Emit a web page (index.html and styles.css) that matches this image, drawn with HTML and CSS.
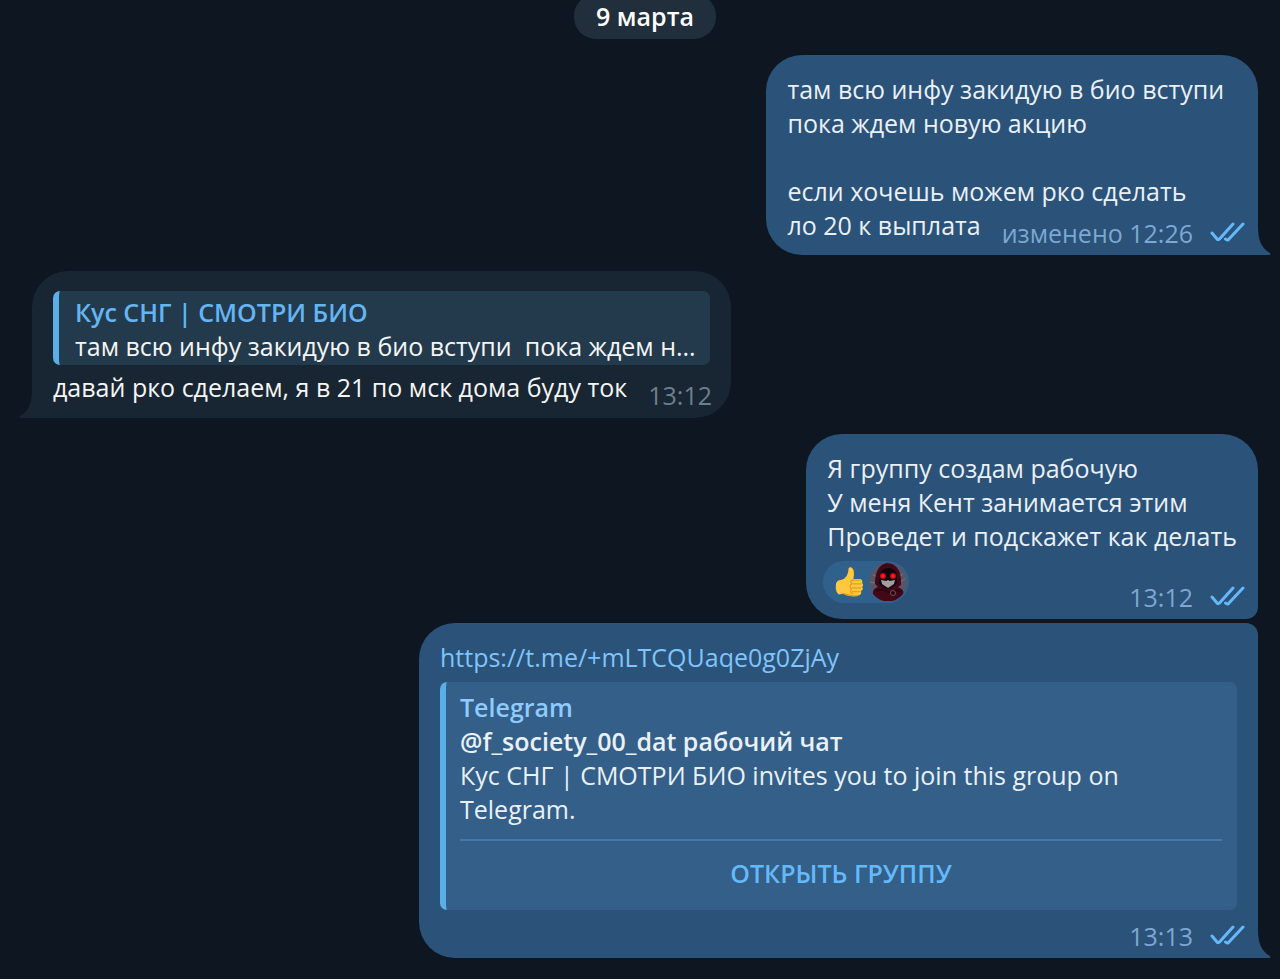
FILE: index.html
```
<!DOCTYPE html>
<html lang="ru">
<head>
  <meta charset="UTF-8">
  <title>Чат</title>
  <link rel="stylesheet" href="styles.css">
</head>
<body>
  <!-- shared icons -->
  <svg class="sprite" aria-hidden="true">
    <symbol id="checks" viewBox="0 0 36 22">
      <path d="M3 12 L8.500 18.500 Q9.500 19 10.500 18 L24 3 M16.500 18 Q18.500 20 20 18 L34 3" />
    </symbol>
    <symbol id="tail" viewBox="0 0 14 28">
      <path d="M0 0 C0 12 3 21 12 26 Q13 28 11 28 L0 28 Z" />
    </symbol>
  </svg>

  <main class="chat">
    <time class="date">9 марта</time>

    <article class="message out">
      <p>там всю инфу закидую в био вступи<br>пока ждем новую акцию<br><br>если хочешь можем рко сделать</p>
      <div class="last-line">
        <p>ло 20 к выплата</p>
        <div class="meta">изменено 12:26 <svg class="checks"><use href="#checks" /></svg></div>
      </div>
      <svg class="tail"><use href="#tail" /></svg>
    </article>

    <article class="message in">
      <blockquote class="quote">
        <strong>Кус СНГ | СМОТРИ БИО</strong>
        <p>там всю инфу закидую в био вступи&nbsp; пока ждем н...</p>
      </blockquote>
      <div class="last-line">
        <p>давай рко сделаем, я в 21 по мск дома буду ток</p>
        <div class="meta">13:12</div>
      </div>
      <svg class="tail"><use href="#tail" /></svg>
    </article>

    <article class="message out grouped-first">
      <p>Я группу создам рабочую<br>У меня Кент занимается этим<br>Проведет и подскажет как делать</p>
      <div class="last-line with-reaction">
        <button class="reaction" type="button" aria-label="Нравится">
          <svg class="thumb" viewBox="0 0 30 32">
            <path fill="#ffc83d" d="M1 18 Q2 14 6 14 L9 13 Q14 9 14 2 Q15 0 17 1 Q21 3 19 13 L26 13 Q29 14 28 17 Q30 19 28 21 Q30 24 27 25 Q28 29 24 30 Q16 32 9 28 L4 29 Q0 26 1 18 Z" />
            <path fill="none" stroke="#e89b22" stroke-width="1.300" stroke-linecap="round" d="M17 17 Q15 14 19 14 L26 14 M18 18 L27 18 M18 22 L27 22 M18 26 L26 26 M17 18 Q14 21 17 23 Q15 27 18 28 M9 28 Q15 31 23 30" />
          </svg>
          <svg class="avatar" viewBox="0 0 38 38">
            <circle cx="19" cy="19" r="19" fill="#565766" />
            <path d="M1 19 L10 21 M28 21 L36 16 M29 14 L34 11 M4 12 L10 15" stroke="#77777f" />
            <path fill="#430718" d="M6 21 Q6 2 18 0 Q33 1 32 22 L29 24 Q36 27 34 31 A19 19 0 0 1 4 31 Q3 26 9 24 Z" />
            <path fill="#12060d" d="M11 11 Q13 5 19 5 Q27 5 28 13 L28 20 Q25 25 19 26 Q13 25 10 20 Z" />
            <path fill="#a49c9f" d="M12 17 L17 18 L19 17 L21 18 L26 17 L25 21 L19 25 L13 21 Z" />
            <circle cx="14" cy="13" r="3" fill="#cc0718" />
            <circle cx="24" cy="13" r="3" fill="#cc0718" />
            <circle cx="14" cy="13" r="1.500" fill="#ff2430" />
            <circle cx="24" cy="13" r="1.500" fill="#ff2430" />
            <path d="M7 28 Q15 25 21 30 Q27 25 32 29" fill="none" stroke="#23030e" stroke-width="1.500" />
            <circle cx="24" cy="30" r="2.500" fill="#25040f" stroke="#74555f" />
          </svg>
        </button>
        <div class="meta">13:12 <svg class="checks"><use href="#checks" /></svg></div>
      </div>
    </article>

    <article class="message out grouped-last">
      <a class="link" href="https://t.me/+mLTCQUaqe0g0ZjAy">https://t.me/+mLTCQUaqe0g0ZjAy</a>
      <section class="preview">
        <strong class="site">Telegram</strong>
        <strong>@f_society_00_dat рабочий чат</strong>
        <p>Кус СНГ | СМОТРИ БИО invites you to join this group on Telegram.</p>
        <button class="open" type="button">ОТКРЫТЬ ГРУППУ</button>
      </section>
      <div class="last-line">
        <div class="meta">13:13 <svg class="checks"><use href="#checks" /></svg></div>
      </div>
      <svg class="tail"><use href="#tail" /></svg>
    </article>
  </main>
</body>
</html>
```

FILE: styles.css
```
* {
  box-sizing: border-box;
}
body {
  margin: 0;
  background: #0e1621;
  color: #e9f0f7;
  font-family: "Open Sans", "Noto Sans", sans-serif;
  font-size: 25px;
  line-height: 34px;
}
p {
  margin: 0;
}
strong {
  display: block;
  font-weight: 600;
}
button {
  border: 0;
  font: inherit;
  cursor: pointer;
}
.sprite {
  position: absolute;
  width: 0;
  height: 0;
}
.chat {
  display: flex;
  flex-direction: column;
  align-items: flex-start;
  gap: 16px;
  padding: 0 22px 20px 32px;
}
.date {
  align-self: center;
  margin-top: -6px;
  padding: 5px 22px 6px;
  border-radius: 22px;
  background: #202f3b;
  color: #fff;
  font-weight: 600;
}

/* bubbles */
.message {
  position: relative;
  max-width: 839px;
  padding: 17px 21px 13px;
  border-radius: 36px;
}
.out {
  align-self: flex-end;
  background: #2b5278;
  border-bottom-right-radius: 0;
}
.in {
  padding: 20px 21px 14px;
  background: #182533;
  color: #f5f5f5;
  border-bottom-left-radius: 0;
}
.grouped-first {
  border-bottom-right-radius: 12px;
}
.grouped-last {
  margin-top: -12px;
  border-top-right-radius: 12px;
}
.tail {
  position: absolute;
  left: 100%;
  bottom: 0;
  width: 14px;
  height: 28px;
  fill: #2b5278;
}
.in .tail {
  left: auto;
  right: 100%;
  fill: #182533;
  transform: scaleX(-1);
}

/* last line of a message with the time beside it */
.last-line {
  display: flex;
  align-items: flex-end;
  justify-content: space-between;
  gap: 21px;
}
.meta {
  display: flex;
  align-items: center;
  gap: 16px;
  margin: 0 -8px -8px auto;
  color: #7da8d3;
  white-space: nowrap;
}
.in .meta {
  margin-right: -2px;
  color: #6d7f8f;
}
.checks {
  width: 36px;
  height: 22px;
  margin-bottom: 2px;
  fill: none;
  stroke: #64b9fa;
  stroke-width: 3;
  stroke-linecap: round;
  stroke-linejoin: round;
}

/* reply */
.quote {
  width: 100%;
  margin: 0 0 5px;
  padding: 4px 12px 2px 16px;
  border-left: 6px solid #5baee6;
  border-radius: 7px;
  background: #233a4d;
}
.quote strong {
  color: #64b5f2;
}
.quote p {
  white-space: nowrap;
}

.with-reaction {
  padding-top: 8px;
}
.reaction {
  display: flex;
  align-items: center;
  gap: 5px;
  margin: 0 0 3px -4px;
  padding: 2px 2px 2px 12px;
  border-radius: 21px;
  background: #30618d;
}
.thumb {
  width: 29px;
  height: 32px;
}
.avatar {
  width: 38px;
  height: 38px;
}

/* link preview */
.link {
  color: #7fc4fb;
  text-decoration: none;
}
.preview {
  margin: 8px 0 9px;
  padding: 8px 15px 5px 14px;
  border-left: 6px solid #5baee6;
  border-radius: 7px;
  background: #335f88;
}
.site {
  color: #90caff;
}
.open {
  display: block;
  width: 100%;
  margin-top: 13px;
  padding: 15px 0;
  border-top: 2px solid #457aa6;
  background: none;
  color: #64b9fa;
  font-weight: 600;
}
```
